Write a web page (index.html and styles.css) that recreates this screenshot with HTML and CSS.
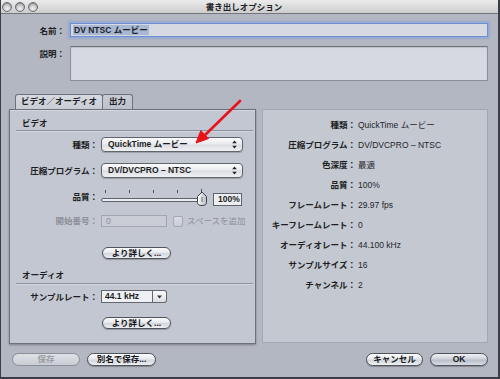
FILE: index.html
```html
<!DOCTYPE html>
<html lang="ja">
<head>
    <meta charset="UTF-8">
    <title>書き出しオプション</title>
    <link rel="stylesheet" href="styles.css">
</head>
<body>
    <div class="window">
        <div class="titlebar">
            <div class="lights"><span></span><span></span><span></span></div>
            <div class="title">書き出しオプション</div>
        </div>

        <div class="meta">
            <div class="meta-row">
                <div class="meta-label">名前：</div>
                <div class="field name-field"><span class="sel">DV NTSC ムービー</span></div>
            </div>
            <div class="meta-row desc-row">
                <div class="meta-label">説明：</div>
                <div class="field desc-field"></div>
            </div>
        </div>

        <div class="main">
            <div class="tabview">
                <div class="tabs">
                    <div class="tab active">ビデオ／オーディオ</div>
                    <div class="tab">出力</div>
                </div>
                <div class="tab-panel">
                    <div class="section-head video-head">ビデオ</div>

                    <div class="row row-kind">
                        <span class="lbl">種類：</span>
                        <div class="popup">QuickTime ムービー
                            <svg class="updown" width="5" height="9" viewBox="0 0 5 9"><path d="M2.5 0.5 L4.8 3.3 H0.2 Z M2.5 8.5 L4.8 5.7 H0.2 Z" fill="#222"/></svg>
                        </div>
                    </div>

                    <div class="row row-codec">
                        <span class="lbl">圧縮プログラム：</span>
                        <div class="popup">DV/DVCPRO – NTSC
                            <svg class="updown" width="5" height="9" viewBox="0 0 5 9"><path d="M2.5 0.5 L4.8 3.3 H0.2 Z M2.5 8.5 L4.8 5.7 H0.2 Z" fill="#222"/></svg>
                        </div>
                    </div>

                    <div class="row row-quality">
                        <span class="lbl">品質：</span>
                        <svg class="slider" width="106" height="18" viewBox="0 0 106 18">
                            <defs>
                                <linearGradient id="thumb" x1="0" x2="1" y1="0" y2="0">
                                    <stop offset="0" stop-color="#fdfdfd"/>
                                    <stop offset="1" stop-color="#b9bcc4"/>
                                </linearGradient>
                            </defs>
                            <g stroke="#4d5058" stroke-width="1">
                                <line x1="4.5" y1="2" x2="4.5" y2="5"/>
                                <line x1="28.5" y1="2" x2="28.5" y2="5"/>
                                <line x1="52.5" y1="2" x2="52.5" y2="5"/>
                                <line x1="76.5" y1="2" x2="76.5" y2="5"/>
                                <line x1="100.5" y1="1" x2="100.5" y2="4"/>
                            </g>
                            <rect x="0.5" y="10.5" width="99" height="3" rx="1.5" fill="#eceef1" stroke="#5e626b"/>
                            <path d="M101 4 L105.5 8.5 V14.5 Q105.5 17.5 101 17.5 Q96.5 17.5 96.5 14.5 V8.5 Z" fill="url(#thumb)" stroke="#40434a"/>
                            <line x1="101" y1="9" x2="101" y2="14" stroke="#6a6d75"/>
                        </svg>
                        <div class="field pct">100%</div>
                    </div>

                    <div class="row row-start disabled">
                        <span class="lbl">開始番号：</span>
                        <div class="field start-field">0</div>
                        <span class="checkbox"></span>
                        <span class="check-label">スペースを追加</span>
                    </div>

                    <div class="row row-more">
                        <span class="lbl"></span>
                        <button class="pill more">より詳しく...</button>
                    </div>

                    <div class="section-head audio-head">オーディオ</div>

                    <div class="row row-rate">
                        <span class="lbl">サンプルレート：</span>
                        <div class="combo">
                            <div class="combo-text">44.1 kHz</div>
                            <div class="combo-btn">
                                <svg width="5" height="4" viewBox="0 0 5 4"><path d="M0 0.5 H5 L2.5 3.5 Z" fill="#333"/></svg>
                            </div>
                        </div>
                    </div>

                    <div class="row row-more2">
                        <span class="lbl"></span>
                        <button class="pill more">より詳しく...</button>
                    </div>
                </div>
            </div>

            <div class="summary">
                <div class="srow"><span class="slbl">種類：</span><span>QuickTime ムービー</span></div>
                <div class="srow"><span class="slbl">圧縮プログラム：</span><span>DV/DVCPRO – NTSC</span></div>
                <div class="srow"><span class="slbl">色深度：</span><span>最適</span></div>
                <div class="srow"><span class="slbl">品質：</span><span>100%</span></div>
                <div class="srow"><span class="slbl">フレームレート：</span><span>29.97 fps</span></div>
                <div class="srow"><span class="slbl">キーフレームレート：</span><span>0</span></div>
                <div class="srow"><span class="slbl">オーディオレート：</span><span>44.100 kHz</span></div>
                <div class="srow"><span class="slbl">サンプルサイズ：</span><span>16</span></div>
                <div class="srow"><span class="slbl">チャンネル：</span><span>2</span></div>
            </div>
        </div>

        <div class="footer">
            <div class="btn-group">
                <button class="pill save" disabled>保存</button>
                <button class="pill save-as">別名で保存...</button>
            </div>
            <div class="btn-group">
                <button class="pill cancel">キャンセル</button>
                <button class="pill ok">OK</button>
            </div>
        </div>

        <!-- 注釈の赤い矢印 -->
        <svg class="annotation" width="500" height="379" viewBox="0 0 500 379">
            <line x1="240" y1="101" x2="205" y2="135" stroke="#e8121a" stroke-width="2.6" stroke-linecap="round"/>
            <path d="M196 143 L208.6 138.6 L200.8 130.6 Z" fill="#e8121a" stroke="#e8121a" stroke-width="1" stroke-linejoin="round"/>
        </svg>
    </div>
</body>
</html>
```

FILE: styles.css
```css
* {
    box-sizing: border-box;
}
body {
    margin: 0;
    font-family: "Liberation Sans", "Noto Sans CJK JP", sans-serif;
    font-size: 8.5px;
    color: #1c1e23;
}
.window {
    position: relative;
    width: 500px;
    height: 379px;
    background: #b3b7c2;
    border-left: 1px solid #3a3d45;
    border-right: 2px solid #3a3d45;
    border-bottom: 2px solid #3a3d45;
    overflow: hidden;
}

/* タイトルバー */
.titlebar {
    display: flex;
    align-items: center;
    height: 14px;
    background: linear-gradient(#ebebeb, #cdcdcd);
    border-bottom: 1px solid #74767c;
}
.lights {
    display: flex;
    gap: 3px;
    margin-left: 1px;
    width: 60px;
}
.lights span {
    width: 10px;
    height: 10px;
    border-radius: 50%;
    border: 1px solid #6a6b70;
    background: radial-gradient(circle at 50% 70%, #f2f2f2, #b9babf 70%);
    box-shadow: inset 0 1px 1px rgba(0,0,0,0.25);
}
.title {
    flex: 1;
    text-align: center;
    padding-right: 72px;
    font-weight: bold;
    line-height: 12px;
    color: #202226;
}

/* 名前と説明 */
.meta {
    padding: 9px 10px 0 0;
}
.meta-row {
    display: flex;
    gap: 5px;
}
.desc-row {
    margin-top: 8px;
}
.meta-label {
    width: 64px;
    text-align: right;
    font-weight: bold;
    line-height: 14px;
    padding-top: 1px;
}
.field {
    background: #d6d9e1;
    border: 1px solid #8b8f98;
    border-top-color: #6f737c;
}
.name-field {
    flex: 1;
    height: 14px;
    padding: 1px 0 0 2px;
    border-color: #6e8fcc;
    box-shadow: 0 0 0 1px #94abd9, 0 0 2px 2px rgba(120,150,215,0.45);
    line-height: 10px;
}
.sel {
    display: inline-block;
    background: #a8b7d3;
    padding: 0 1px;
    font-weight: bold;
    line-height: 10px;
}
.desc-field {
    flex: 1;
    height: 35px;
    box-shadow: inset 0 1px 1px rgba(0,0,0,0.12);
}

/* メイン */
.main {
    display: flex;
    gap: 6px;
    margin-top: 13px;
    padding-left: 8px;
}
.tabview {
    width: 247px;
}
.tabs {
    display: flex;
    padding-left: 6px;
    height: 15px;
}
.tab {
    height: 15px;
    border: 1px solid #6d717a;
    border-bottom: none;
    border-radius: 3px 3px 0 0;
    background: linear-gradient(#c9ccd4, #bcc0ca);
    font-weight: bold;
    text-align: center;
    line-height: 13px;
    width: 31px;
    margin-left: -1px;
}
.tab.active {
    width: 88px;
    margin-left: 0;
    background: linear-gradient(#d7dae1, #c8ccd5);
}
.tab-panel {
    height: 235px;
    border: 1px solid #6d717a;
    background: #c3c7d1;
    box-shadow: 0 1px 2px rgba(0,0,0,0.3), inset 0 1px 0 #d4d7de;
}
.section-head {
    margin: 0 2px 0 6px;
    padding-left: 6px;
    font-weight: bold;
    line-height: 10px;
    border-bottom: 1px solid #8e929c;
    box-shadow: 0 1px 0 #d3d6dd;
}
.video-head {
    height: 21px;
    padding-top: 8px;
}
.audio-head {
    height: 18px;
    margin-top: 7px;
    padding-top: 4px;
}
.row {
    display: flex;
    align-items: center;
    gap: 3px;
}
.lbl {
    width: 88px;
    text-align: right;
    font-weight: bold;
    line-height: 10px;
}
.row-kind { margin-top: 6px; height: 15px; }
.row-codec { margin-top: 11px; height: 15px; }
.row-quality { margin-top: 10px; height: 18px; }
.row-start { margin-top: 9px; height: 12px; }
.row-more { margin-top: 20px; height: 12px; }
.row-rate { margin-top: 6px; height: 13px; }
.row-more2 { margin-top: 14px; height: 12px; }

.popup {
    position: relative;
    width: 142px;
    height: 15px;
    padding-left: 6px;
    border: 1px solid #60646d;
    border-radius: 4px;
    background: linear-gradient(#fbfbfc, #e9eaee 48%, #dcdee3 52%, #eef0f2);
    box-shadow: 0 1px 1px rgba(0,0,0,0.2);
    font-weight: bold;
    line-height: 13px;
}
.updown {
    position: absolute;
    right: 5px;
    top: 2px;
}
.slider {
    display: block;
    margin-top: 0;
}
.pct {
    width: 29px;
    height: 13px;
    margin-left: 3px;
    margin-top: 4px;
    padding-left: 4px;
    background: #eceef1;
    border-color: #5f636c;
    font-weight: bold;
    line-height: 11px;
}
.disabled .lbl,
.disabled .check-label {
    color: #8d919a;
}
.start-field {
    width: 66px;
    height: 12px;
    padding-left: 4px;
    background: #c9ccd5;
    border-color: #a2a6af;
    color: #8d919a;
    line-height: 10px;
}
.checkbox {
    width: 10px;
    height: 11px;
    margin-left: 3px;
    border: 1px solid #a3a7b0;
    border-radius: 2px;
    background: linear-gradient(#d9dce3, #c8ccd5);
}
.check-label {
    margin-left: 1px;
    line-height: 10px;
}
.combo {
    display: flex;
    height: 13px;
}
.combo-text {
    width: 52px;
    padding-left: 3px;
    background: #eef0f3;
    border: 1px solid #62666f;
    font-weight: bold;
    line-height: 11px;
}
.combo-btn {
    width: 14px;
    display: flex;
    align-items: center;
    justify-content: center;
    border: 1px solid #62666f;
    border-left: none;
    border-radius: 0 3px 3px 0;
    background: linear-gradient(#fbfbfc, #dcdee3);
}

/* ボタン */
.pill {
    height: 12px;
    padding: 0;
    border: 1px solid #4f535b;
    border-radius: 7px;
    background: linear-gradient(#fdfdfe, #e7e9ed 45%, #d3d6dd 55%, #eef0f3);
    box-shadow: 0 1px 1px rgba(0,0,0,0.25);
    font: bold 8.5px "Liberation Sans", "Noto Sans CJK JP", sans-serif;
    line-height: 10px;
    color: #16181d;
}
.more {
    width: 69px;
    margin-left: 1px;
}

/* 右側の概要 */
.summary {
    width: 226px;
    height: 234px;
    margin-top: 15px;
    padding-top: 5px;
    border: 1px solid #a3a7b0;
    background: #c4c8d1;
}
.srow {
    display: flex;
    gap: 2px;
    height: 20px;
    align-items: center;
    line-height: 10px;
    color: #23252b;
}
.slbl {
    width: 93px;
    text-align: right;
    font-weight: bold;
    color: #1c1e23;
}

/* 下部のボタン */
.footer {
    display: flex;
    justify-content: space-between;
    margin-top: 9px;
    padding: 0 10px 0 11px;
}
.btn-group {
    display: flex;
    gap: 7px;
}
.footer .pill {
    height: 13px;
    line-height: 11px;
}
.save { width: 68px; }
.save-as { width: 69px; }
.cancel { width: 57px; }
.ok {
    width: 58px;
    background: linear-gradient(#eef0f4, #cfd3db 45%, #b9bec9 55%, #d8dce3);
}
.save:disabled {
    color: #9a9ea7;
    border-color: #8a8e97;
    background: linear-gradient(#dfe1e6, #c9ccd4);
    box-shadow: none;
}

.annotation {
    position: absolute;
    left: -1px;
    top: 0;
    pointer-events: none;
}
```
